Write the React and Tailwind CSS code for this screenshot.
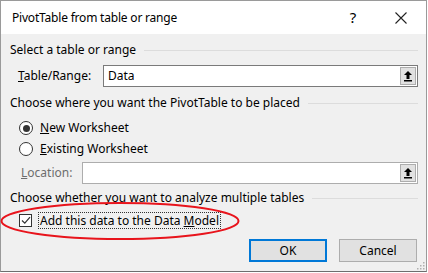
import React from 'react';

const font = { fontFamily: '"Noto Sans", "Open Sans", sans-serif' };

function UploadButton() {
  return (
    <div className="w-[16px] h-[18px] mr-[1px] bg-[#e1e1e1] border border-[#adadad] flex items-center justify-center">
      <svg width="10" height="12" viewBox="0 0 10 12">
        <path d="M5 1 L9 5 H6.5 V9 H3.5 V5 H1 Z" fill="#000" />
        <rect x="1" y="10" width="8" height="1.5" fill="#000" />
      </svg>
    </div>
  );
}

function SectionHeader({ children }) {
  return (
    <div className="flex items-center h-[18px]">
      <span className="whitespace-nowrap">{children}</span>
      <div className="flex-1 h-px bg-[#dcdcdc] ml-[8px] mr-[2px]" />
    </div>
  );
}

export default function App() {
  return (
    <div className="w-[428px] h-[273px] bg-white text-[12px] text-black relative" style={font}>
      <div className="w-[427px] h-[272px] border border-[#9a9a9a] border-b-[#6e6e6e] flex flex-col">
        {/* Title bar */}
        <div className="h-[33px] bg-white flex items-center pl-[11px] shrink-0">
          <span className="text-[12px] tracking-[-0.2px] flex-1">PivotTable from table or range</span>
          <span className="text-[15px] w-[20px] text-center mr-[32px]">?</span>
          <svg width="12" height="12" viewBox="0 0 12 12" className="mr-[19px]">
            <path d="M0.5 0.5 L11.5 11.5 M11.5 0.5 L0.5 11.5" stroke="#222" strokeWidth="1.1" />
          </svg>
        </div>

        {/* Body */}
        <div className="flex-1 bg-[#f0f0f0] pl-[9px] pr-[6px] pt-[7px] flex flex-col relative">
          <SectionHeader>Select a table or range</SectionHeader>

          <div className="flex items-center mt-[6px] h-[22px]">
            <span className="ml-[8px] w-[85px]"><u>T</u>able/Range:</span>
            <div className="flex-1 h-[22px] bg-white border border-[#7a7a7a] flex items-center pl-[4px] mr-[2px]">
              <span className="flex-1">Data</span>
              <UploadButton />
            </div>
          </div>

          <div className="mt-[7px]">
            <SectionHeader>Choose where you want the PivotTable to be placed</SectionHeader>
          </div>

          <div className="flex items-center mt-[6px] h-[20px] ml-[9px]">
            <div className="w-[14px] h-[14px] rounded-full border border-[#333] flex items-center justify-center bg-white">
              <div className="w-[7px] h-[7px] rounded-full bg-[#333]" />
            </div>
            <span className="ml-[7px]"><u>N</u>ew Worksheet</span>
          </div>
          <div className="flex items-center mt-[1px] h-[20px] ml-[9px]">
            <div className="w-[14px] h-[14px] rounded-full border border-[#333] bg-white" />
            <span className="ml-[7px]"><u>E</u>xisting Worksheet</span>
          </div>

          <div className="flex items-center mt-[3px] h-[22px]">
            <span className="ml-[11px] w-[61px] text-[#6d6d6d]"><u>L</u>ocation:</span>
            <div className="flex-1 h-[22px] bg-white border border-[#adadad] flex items-center justify-end mr-[2px]">
              <UploadButton />
            </div>
          </div>

          <div className="mt-[5px]">
            <SectionHeader>Choose whether you want to analyze multiple tables</SectionHeader>
          </div>

          <div className="flex items-center mt-[4px] h-[18px] ml-[9px]">
            <div className="w-[13px] h-[13px] border border-[#333] bg-white flex items-center justify-center">
              <svg width="10" height="9" viewBox="0 0 10 9">
                <path d="M1 4.5 L3.8 7.2 L9 1.2" stroke="#333" strokeWidth="1.2" fill="none" />
              </svg>
            </div>
            <span className="ml-[6px] px-[1px] border border-dotted border-[#333] leading-[15px]">
              Add this data to the Data <u>M</u>odel
            </span>
          </div>

          <div className="flex justify-end gap-[12px] mt-[10px] mr-[3px]">
            <button className="w-[78px] h-[23px] bg-[#e1e1e1] border-2 border-[#0078d7]">OK</button>
            <button className="w-[78px] h-[23px] bg-[#e1e1e1] border border-[#adadad]">Cancel</button>
          </div>

          {/* resize grip */}
          <svg width="8" height="8" viewBox="0 0 8 8" className="absolute right-[1px] bottom-[1px]">
            {[[6, 0], [6, 3], [3, 3], [6, 6], [3, 6], [0, 6]].map(([x, y], i) => (
              <rect key={i} x={x} y={y} width="1.5" height="1.5" fill="#b0b0b0" />
            ))}
          </svg>
        </div>
      </div>

      {/* red highlight ellipse */}
      <svg width="428" height="273" className="absolute left-0 top-0 pointer-events-none">
        <ellipse cx="120" cy="221" rx="118.5" ry="18" fill="none" stroke="#e8141c" strokeWidth="2" />
      </svg>
    </div>
  );
}
